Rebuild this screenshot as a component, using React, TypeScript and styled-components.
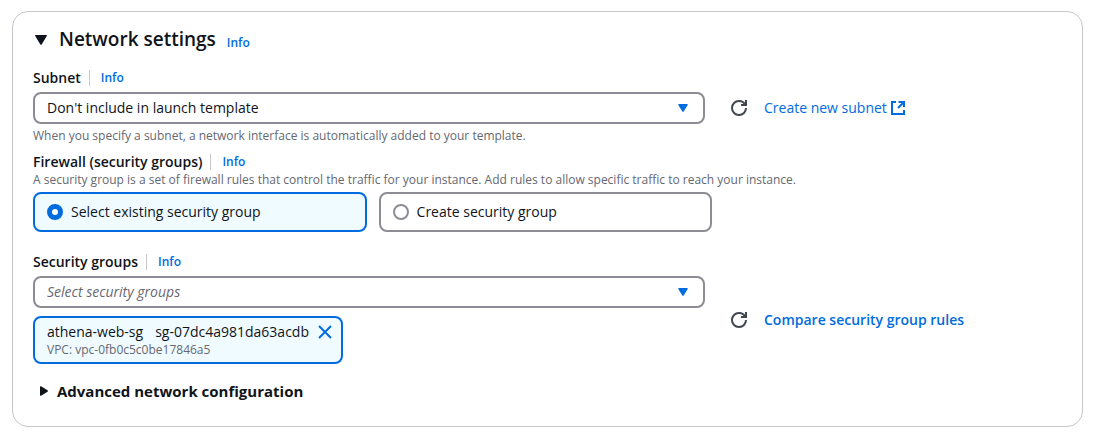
import React, { useState } from "react";
import styled, { createGlobalStyle } from "styled-components";

const color = {
  text: "#0f141a",
  muted: "#656871",
  link: "#006ce0",
  control: "#8c8c94",
  divider: "#c6c6cd",
  selected: "#f0fbff",
  icon: "#424650",
};

const GlobalStyle = createGlobalStyle`
  * { box-sizing: border-box; }
  body {
    margin: 0;
    background: #fff;
    color: ${color.text};
    font-family: "Open Sans", "Noto Sans", sans-serif;
    font-size: 14px;
    line-height: 20px;
  }
`;

const Panel = styled.section`
  margin: 11px 12px 13px;
  padding: 15px 20px 25px;
  border: 1px solid ${color.divider};
  border-radius: 16px;
`;

const Header = styled.header`
  display: flex;
  align-items: baseline;
  gap: 11px;
  margin-bottom: 15px;
`;

const Title = styled.h2`
  margin: 0;
  font-size: 19px;
  font-weight: 600;
  line-height: 24px;
`;

const Toggle = styled.button`
  display: flex;
  align-items: center;
  gap: 8px;
  padding: 0;
  border: 0;
  background: none;
  color: inherit;
  font: inherit;
  cursor: pointer;
`;

const AdvancedTitle = styled.h3`
  margin: 17px 0 0;
  padding-left: 4px;
  font-size: 15px;
  font-weight: 700;
  line-height: 20px;
`;

const InfoLink = styled.a`
  color: ${color.link};
  font-size: 12px;
  font-weight: 600;
  text-decoration: none;
`;

const LabelRow = styled.div`
  display: flex;
  align-items: center;
  height: 20px;
`;

const Label = styled.label`
  font-weight: 600;
`;

const Divider = styled.span`
  width: 1px;
  height: 16px;
  margin: 0 11px 0 8px;
  background: ${color.divider};
`;

const Hint = styled.p`
  margin: 0;
  color: ${color.muted};
  font-size: 12px;
  line-height: 16px;
`;

const Field = styled.div<{ $top?: number }>`
  margin-top: ${(p) => p.$top ?? 0}px;
`;

const FieldGrid = styled.div`
  display: grid;
  grid-template-columns: 2fr 1fr;
  column-gap: 21px;
  align-items: center;
  margin: 4px 0;
`;

const SelectBox = styled.div`
  position: relative;
`;

const Select = styled.select<{ $placeholder?: boolean }>`
  display: block;
  appearance: none;
  width: 100%;
  height: 32px;
  padding: 0 36px 0 12px;
  border: 2px solid ${color.control};
  border-radius: 8px;
  background: #fff;
  color: ${(p) => (p.$placeholder ? color.muted : color.text)};
  font: inherit;
  font-style: ${(p) => (p.$placeholder ? "italic" : "normal")};
`;

const SelectCaret = styled.svg`
  position: absolute;
  top: 12px;
  right: 17px;
  pointer-events: none;
`;

const Actions = styled.div`
  display: flex;
  align-items: center;
  gap: 17px;
  padding-left: 5px;
`;

const IconButton = styled.button`
  display: flex;
  padding: 0;
  border: 0;
  background: none;
  color: ${color.icon};
  cursor: pointer;
`;

const ActionLink = styled.a<{ $strong?: boolean }>`
  display: flex;
  align-items: center;
  gap: 3px;
  color: ${color.link};
  font-weight: ${(p) => (p.$strong ? 600 : 400)};
  text-decoration: none;
`;

const Tiles = styled.div`
  display: grid;
  grid-template-columns: 1fr 1fr;
  gap: 12px;
  width: 66%;
  margin-top: 4px;
`;

const Tile = styled.label<{ $checked: boolean }>`
  display: flex;
  align-items: center;
  gap: 8px;
  height: 40px;
  padding: 0 12px;
  border: 2px solid ${(p) => (p.$checked ? color.link : color.control)};
  border-radius: 8px;
  background: ${(p) => (p.$checked ? color.selected : "#fff")};
  cursor: pointer;
`;

const Radio = styled.input`
  appearance: none;
  width: 16px;
  height: 16px;
  margin: 0;
  border: 2px solid ${color.control};
  border-radius: 50%;
  background: #fff;

  &:checked {
    border: 5px solid ${color.link};
  }
`;

const Stack = styled.div`
  display: flex;
  flex-direction: column;
  align-items: stretch;
  gap: 8px;
`;

const Token = styled.div`
  align-self: flex-start;
  padding: 4px 8px 4px 12px;
  border: 2px solid ${color.link};
  border-radius: 8px;
  background: ${color.selected};
`;

const TokenLine = styled.div`
  display: flex;
  align-items: center;
  gap: 12px;
`;

const TokenDismiss = styled(IconButton)`
  margin-left: -4px;
  color: ${color.link};
`;

const RefreshIcon = () => (
  <svg width="16" height="16" viewBox="0 0 16 16" fill="none" stroke="currentColor" strokeWidth="2" aria-hidden="true">
    <path d="M10 5h5V0" />
    <path d="M15 8a6.957 6.957 0 0 1-7 7 6.957 6.957 0 0 1-7-7 6.957 6.957 0 0 1 7-7 6.87 6.87 0 0 1 6.3 4" />
  </svg>
);

const ExternalIcon = () => (
  <svg width="16" height="16" viewBox="0 0 16 16" fill="none" stroke="currentColor" strokeWidth="2" aria-hidden="true">
    <path d="M8.500 2H14v5" />
    <path d="m8 8 6-6" />
    <path d="M14 10v4H2V2h4" />
  </svg>
);

const CloseIcon = () => (
  <svg width="16" height="16" viewBox="0 0 16 16" fill="none" stroke="currentColor" strokeWidth="2" aria-hidden="true">
    <path d="m2 2 12 12M14 2 2 14" />
  </svg>
);

const DownCaret = () => (
  <SelectCaret width="10" height="8" viewBox="0 0 10 8" fill={color.link} aria-hidden="true">
    <path d="M1 0h8q1 0 .7 1L5.7 7.4q-.7.8-1.4 0L.3 1Q0 0 1 0z" />
  </SelectCaret>
);

export default function App() {
  const [mode, setMode] = useState("existing");

  return (
    <>
      <GlobalStyle />
      <Panel>
        <Header>
          <Title>
            <Toggle type="button" aria-expanded="true">
              <svg width="18" height="16" viewBox="0 0 18 16" fill="currentColor" aria-hidden="true">
                <path d="M2.8 4h10.4q1.2 0 .6 1L8.800 13.200q-.8 1-1.600 0L2.200 5q-.6-1 .6-1z" />
              </svg>
              Network settings
            </Toggle>
          </Title>
          <InfoLink href="#network">Info</InfoLink>
        </Header>

        <Field>
          <LabelRow>
            <Label htmlFor="subnet">Subnet</Label>
            <Divider />
            <InfoLink href="#subnet-info">Info</InfoLink>
          </LabelRow>
          <FieldGrid>
            <SelectBox>
              <Select id="subnet">
                <option>Don't include in launch template</option>
              </Select>
              <DownCaret />
            </SelectBox>
            <Actions>
              <IconButton type="button" aria-label="Refresh subnets">
                <RefreshIcon />
              </IconButton>
              <ActionLink href="#create-subnet">
                Create new subnet
                <ExternalIcon />
              </ActionLink>
            </Actions>
          </FieldGrid>
          <Hint>When you specify a subnet, a network interface is automatically added to your template.</Hint>
        </Field>

        <Field $top={8} role="radiogroup" aria-labelledby="firewall">
          <LabelRow>
            <Label as="span" id="firewall">Firewall (security groups)</Label>
            <Divider />
            <InfoLink href="#firewall-info">Info</InfoLink>
          </LabelRow>
          <Hint>
            A security group is a set of firewall rules that control the traffic for your instance. Add rules to allow
            specific traffic to reach your instance.
          </Hint>
          <Tiles>
            <Tile $checked={mode === "existing"}>
              <Radio type="radio" name="sg" checked={mode === "existing"} onChange={() => setMode("existing")} />
              Select existing security group
            </Tile>
            <Tile $checked={mode === "create"}>
              <Radio type="radio" name="sg" checked={mode === "create"} onChange={() => setMode("create")} />
              Create security group
            </Tile>
          </Tiles>
        </Field>

        <Field $top={20}>
          <LabelRow>
            <Label htmlFor="groups">Security groups</Label>
            <Divider />
            <InfoLink href="#groups-info">Info</InfoLink>
          </LabelRow>
          <FieldGrid>
            <Stack>
              <SelectBox>
                <Select id="groups" $placeholder>
                  <option>Select security groups</option>
                </Select>
                <DownCaret />
              </SelectBox>
              <Token>
                <TokenLine>
                  <span>athena-web-sg</span>
                  <span>sg-07dc4a981da63acdb</span>
                  <TokenDismiss type="button" aria-label="Remove athena-web-sg">
                    <CloseIcon />
                  </TokenDismiss>
                </TokenLine>
                <Hint>VPC: vpc-0fb0c5c0be17846a5</Hint>
              </Token>
            </Stack>
            <Actions>
              <IconButton type="button" aria-label="Refresh security groups">
                <RefreshIcon />
              </IconButton>
              <ActionLink href="#compare" $strong>
                Compare security group rules
              </ActionLink>
            </Actions>
          </FieldGrid>
        </Field>

        <AdvancedTitle>
          <Toggle type="button" aria-expanded="false">
            <svg width="12" height="12" viewBox="0 0 12 12" fill="currentColor" aria-hidden="true">
              <path d="M3 2q0-1.200 1-.7l6.500 4q1 .7 0 1.400l-6.500 4q-1 .5-1-.7z" />
            </svg>
            Advanced network configuration
          </Toggle>
        </AdvancedTitle>
      </Panel>
    </>
  );
}
